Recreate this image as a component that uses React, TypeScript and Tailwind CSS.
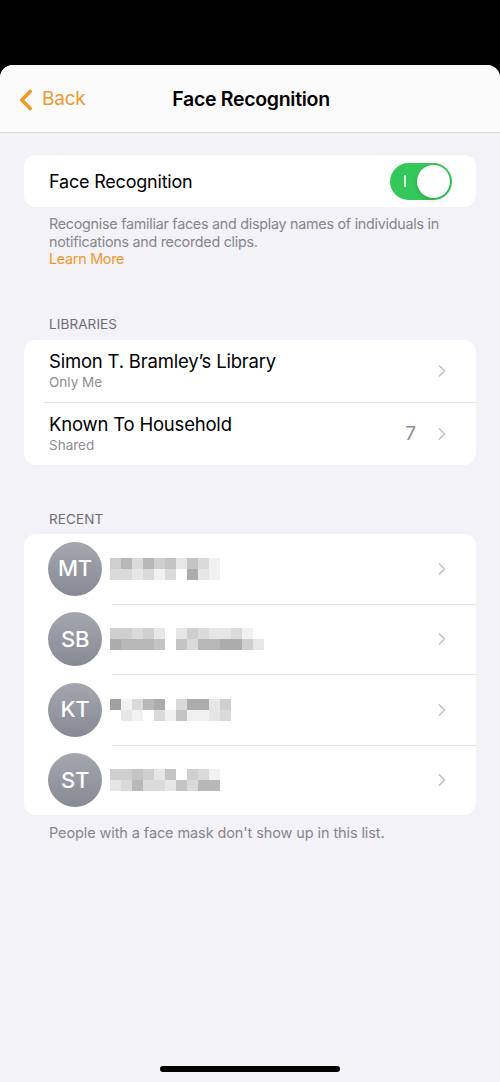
import { ChevronLeft, ChevronRight } from 'lucide-react';

// pixelated (blurred) names, each cell 11px, digits = shade level
const shades = ['#ffffff', '#f1f1f1', '#e6e6e6', '#dadada', '#cfcfcf', '#c4c4c4', '#b8b8b8', '#acacac', '#a0a0a0', '#959595'];

const people = [
  { initials: 'MT', rows: ['4636452531', '3323130721'] },
  { initials: 'SB', rows: ['44342024322310', '76665053667742'] },
  { initials: 'KT', rows: ['81367037724', '02103151123'] },
  { initials: 'ST', rows: ['4454250431', '2363325366'] },
];

function Pixels({ rows }: { rows: string[] }) {
  return (
    <div className="flex flex-col">
      {rows.map((r, i) => (
        <div key={i} className="flex">
          {r.split('').map((c, j) => (
            <div key={j} className="w-[11px] h-[11px]" style={{ backgroundColor: shades[Number(c)] }} />
          ))}
        </div>
      ))}
    </div>
  );
}

export default function App() {
  return (
    <div className="w-[500px] h-[1082px] bg-black overflow-hidden" style={{ fontFamily: 'Inter, "Liberation Sans", sans-serif' }}>
      <div className="h-[65px]" />
      <div className="h-[1017px] bg-[#f2f2f7] rounded-t-[13px] overflow-hidden flex flex-col">
        {/* nav */}
        <div className="h-[68px] bg-[#fbfbfc] border-b border-[#dcdce0] flex items-center relative">
          <div className="flex items-center pl-[9px] pt-[2px] text-[#f0982a]">
            <ChevronLeft size={34} strokeWidth={2.6} />
            <span className="text-[19px] ml-[-1px] tracking-[-0.2px]">Back</span>
          </div>
          <div className="absolute inset-0 flex items-center justify-center pt-[3px] pointer-events-none">
            <span className="text-[19.5px] font-semibold text-black tracking-[-0.3px] ml-[2px]">Face Recognition</span>
          </div>
        </div>

        <div className="px-[24px] pt-[22px]">
          <div className="bg-white rounded-[12px] h-[52px] flex items-center justify-between pl-[25px] pr-[24px]">
            <span className="text-[18px] text-black tracking-[-0.2px]">Face Recognition</span>
            <div className="w-[62px] h-[37px] rounded-full bg-[#34c759] relative flex items-center">
              <div className="absolute left-[14px] top-[12px] w-[1.5px] h-[12px] bg-white/80" />
              <div className="absolute right-[2px] top-[2px] w-[33px] h-[33px] rounded-full bg-white shadow-[0_2px_4px_rgba(0,0,0,0.15)]" />
            </div>
          </div>
          <div className="px-[25px] pt-[8px] text-[14.3px] leading-[17.5px] text-[#86868b] tracking-[-0.25px]">
            <p>Recognise familiar faces and display names of individuals in notifications and recorded clips.</p>
            <p className="text-[#f0982a]">Learn More</p>
          </div>

          <div className="px-[25px] pt-[46px] pb-[6px] text-[13.5px] text-[#6e6e73] tracking-[0.1px]">LIBRARIES</div>
          <div className="bg-white rounded-[12px] overflow-hidden">
            <div className="h-[62px] flex items-center pl-[25px] pr-[24px]">
              <div className="flex-1 flex flex-col">
                <span className="text-[18.5px] leading-[23px] text-black tracking-[-0.2px]">Simon T. Bramley’s Library</span>
                <span className="text-[13.5px] leading-[18px] text-[#8e8e93]">Only Me</span>
              </div>
              <ChevronRight size={20} strokeWidth={2} className="text-[#c4c4c7]" />
            </div>
            <div className="ml-[20px] border-t border-[#e2e2e6]" />
            <div className="h-[62px] flex items-center pl-[25px] pr-[24px]">
              <div className="flex-1 flex flex-col">
                <span className="text-[18.5px] leading-[23px] text-black tracking-[-0.2px]">Known To Household</span>
                <span className="text-[13.5px] leading-[18px] text-[#8e8e93]">Shared</span>
              </div>
              <span className="text-[19px] text-[#8e8e93] mr-[16px]">7</span>
              <ChevronRight size={20} strokeWidth={2} className="text-[#c4c4c7]" />
            </div>
          </div>

          <div className="px-[25px] pt-[44px] pb-[5px] text-[13.5px] text-[#6e6e73] tracking-[0.1px]">RECENT</div>
          <div className="bg-white rounded-[12px] overflow-hidden">
            {people.map((p, i) => (
              <div key={p.initials}>
                {i > 0 && <div className="ml-[88px] border-t border-[#e2e2e6]" />}
                <div className="h-[69.5px] flex items-center pl-[24px] pr-[24px]">
                  <div className="w-[54px] h-[54px] rounded-full bg-gradient-to-b from-[#a4a7ae] to-[#878a93] flex items-center justify-center">
                    <span className="text-white text-[22px] font-medium tracking-[-0.3px]">{p.initials}</span>
                  </div>
                  <div className="flex-1 pl-[8px]">
                    <Pixels rows={p.rows} />
                  </div>
                  <ChevronRight size={20} strokeWidth={2} className="text-[#c4c4c7]" />
                </div>
              </div>
            ))}
          </div>
          <div className="px-[25px] pt-[7px] text-[14.5px] text-[#86868b] tracking-[-0.1px]">People with a face mask don't show up in this list.</div>
        </div>

        <div className="flex-1" />
        <div className="flex justify-center pb-[10px]">
          <div className="w-[180px] h-[6px] rounded-full bg-black" />
        </div>
      </div>
    </div>
  );
}
